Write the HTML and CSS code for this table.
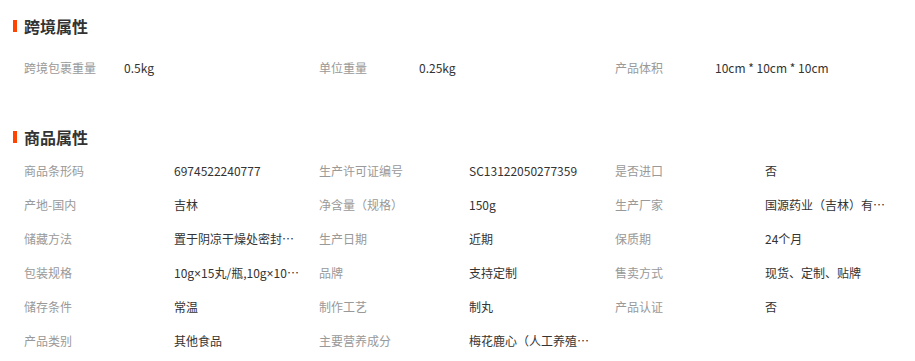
FILE: index.html
```html
<!DOCTYPE html>
<html lang="zh-CN">
<head>
<meta charset="utf-8">
<title>属性</title>
<link rel="stylesheet" href="styles.css">
</head>
<body>
<div class="page">
  <section class="block block-cross">
    <h2 class="title"><span class="bar"></span>跨境属性</h2>
    <div class="grid grid-cross">
      <div class="label">跨境包裹重量</div><div class="value">0.5kg</div>
      <div class="label">单位重量</div><div class="value">0.25kg</div>
      <div class="label">产品体积</div><div class="value">10cm * 10cm * 10cm</div>
    </div>
  </section>
  <section class="block block-goods">
    <h2 class="title"><span class="bar"></span>商品属性</h2>
    <div class="grid grid-goods">
      <div class="label">商品条形码</div><div class="value">6974522240777</div>
      <div class="label">生产许可证编号</div><div class="value">SC13122050277359</div>
      <div class="label">是否进口</div><div class="value">否</div>

      <div class="label">产地-国内</div><div class="value">吉林</div>
      <div class="label">净含量（规格）</div><div class="value">150g</div>
      <div class="label">生产厂家</div><div class="value">国源药业（吉林）有限公司</div>

      <div class="label">储藏方法</div><div class="value">置于阴凉干燥处密封保存</div>
      <div class="label">生产日期</div><div class="value">近期</div>
      <div class="label">保质期</div><div class="value">24个月</div>

      <div class="label">包装规格</div><div class="value">10g<span class="times">×</span>15丸/瓶,10g<span class="times">×</span>10丸/盒</div>
      <div class="label">品牌</div><div class="value">支持定制</div>
      <div class="label">售卖方式</div><div class="value">现货、定制、贴牌</div>

      <div class="label">储存条件</div><div class="value">常温</div>
      <div class="label">制作工艺</div><div class="value">制丸</div>
      <div class="label">产品认证</div><div class="value">否</div>

      <div class="label">产品类别</div><div class="value">其他食品</div>
      <div class="label">主要营养成分</div><div class="value">梅花鹿心（人工养殖）、鹿血</div>
    </div>
  </section>
</div>
</body>
</html>
```

FILE: styles.css
```css
html, body {
  margin: 0;
  padding: 0;
  background: #fff;
}
body {
  font-family: "Noto Sans CJK SC", "Noto Sans", sans-serif;
  font-size: 12px;
  color: #333;
}
.page {
  width: 915px;
  padding-top: 14px;
}
.title {
  margin: 0;
  display: flex;
  align-items: center;
  height: 24px;
  padding-left: 13px;
  font-size: 16px;
  font-weight: bold;
  color: #333;
}
.bar {
  display: inline-block;
  width: 4px;
  height: 12px;
  background: #ff4400;
  margin-right: 7px;
}
.grid {
  display: grid;
  padding-left: 24px;
  grid-auto-rows: 34px;
  align-items: center;
}
.block-cross .grid {
  margin-top: 12px;
}
.block-goods {
  margin-top: 41px;
}
.block-goods .grid {
  margin-top: 4px;
}
.grid-cross {
  grid-template-columns: 100px 195px 100px 196px 100px 1fr;
}
.grid-goods {
  grid-template-columns: 150px 145px 150px 146px 150px 1fr;
}
.label {
  color: #999;
  white-space: nowrap;
}
.value {
  color: #333;
  white-space: nowrap;
  overflow: hidden;
  text-overflow: ellipsis;
  text-spacing-trim: space-all;
  max-width: 129px;
}
.grid-cross .value {
  max-width: none;
}
.times {
  font-family: "Liberation Sans", sans-serif;
}
```
